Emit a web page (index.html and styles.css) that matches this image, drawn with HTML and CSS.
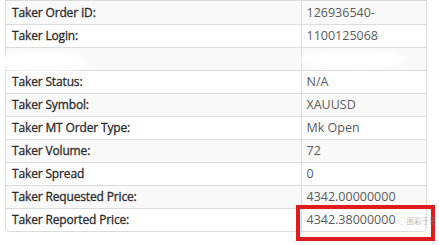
FILE: index.html
```html
<!DOCTYPE html>
<html>
<head>
<meta charset="utf-8">
<link rel="stylesheet" href="styles.css">
</head>
<body>
<div class="page">
  <div class="panel">
    <table class="details">
      <tr class="alt"><td class="label">Taker Order ID:</td><td class="value">126936540-</td></tr>
      <tr><td class="label">Taker Login:</td><td class="value">1100125068</td></tr>
      <tr class="alt hidden-row"><td class="label"><span class="dot"></span></td><td class="value"><span class="dash"></span><span class="dash"></span></td></tr>
      <tr><td class="label">Taker Status:</td><td class="value">N/A</td></tr>
      <tr class="alt"><td class="label">Taker Symbol:</td><td class="value">XAUUSD</td></tr>
      <tr><td class="label">Taker MT Order Type:</td><td class="value">Mk Open</td></tr>
      <tr class="alt"><td class="label">Taker Volume:</td><td class="value">72</td></tr>
      <tr><td class="label">Taker Spread</td><td class="value">0</td></tr>
      <tr class="alt"><td class="label">Taker Requested Price:</td><td class="value">4342.00000000</td></tr>
      <tr><td class="label">Taker Reported Price:</td><td class="value">4342.38000000</td></tr>
    </table>
  </div>
  <div class="blob blob-left"></div>
  <div class="blob blob-right"></div>
  <div class="highlight"></div>
  <div class="watermark"><span class="wm-icon">&#9711;</span>图彩于墨</div>
</div>
</body>
</html>
```

FILE: styles.css
```css
* { box-sizing: border-box; }
html, body { margin: 0; padding: 0; background: #fff; }
body { width: 439px; height: 245px; overflow: hidden; }
.page { position: relative; width: 439px; height: 245px; padding-left: 5px; }
.panel {
  width: 422px;
  border: 1px solid #dcdcdc;
  border-radius: 0 0 4px 4px;
  overflow: hidden;
}
.details { width: 100%; border-collapse: collapse; border-spacing: 0; }
.details tr { height: 23px; }
.details tr + tr td { border-top: 1px solid #dcdcdc; }
.details tr.alt td { background: #f9f9f9; }
.details td { padding: 0; vertical-align: middle; white-space: nowrap; }
.label {
  width: 295px;
  padding-left: 6px !important;
  border-right: 1px solid #dcdcdc;
  font-family: "Open Sans", sans-serif;
  font-weight: 400;
  font-size: 12px;
  color: #2a2a2a;
  letter-spacing: -0.15px;
  -webkit-text-stroke: 0.3px #2a2a2a;
}
.value {
  padding-left: 5px !important;
  font-family: "Open Sans", sans-serif;
  font-weight: 400;
  font-size: 12.5px;
  color: #5a5a5a;
}
.hidden-row td { font-size: 0; }
.dot { display: inline-block; width: 3px; height: 2px; background: #666; margin-left: 14px; vertical-align: top; margin-top: 5px; }
.dash { display: inline-block; width: 6px; height: 1px; background: #999; margin-left: 4px; vertical-align: top; margin-top: 5px; }
.blob { position: absolute; background: #fff; border-radius: 50%; filter: blur(2px); }
.blob-left { left: -4px; top: 52px; width: 92px; height: 20px; }
.blob-right { left: 301px; top: 51px; width: 106px; height: 17px; }
.watermark {
  position: absolute;
  left: 398px;
  top: 216px;
  z-index: 2;
  white-space: nowrap;
  font-family: "Noto Sans CJK SC", sans-serif;
  font-size: 7.5px;
  line-height: 10px;
  color: rgba(120,120,120,0.55);
}
.wm-icon { margin-right: 1px; }
.highlight {
  position: absolute;
  left: 296px;
  top: 205px;
  width: 139px;
  height: 36px;
  border: 4px solid #e01b1b;
  z-index: 1;
}
```
